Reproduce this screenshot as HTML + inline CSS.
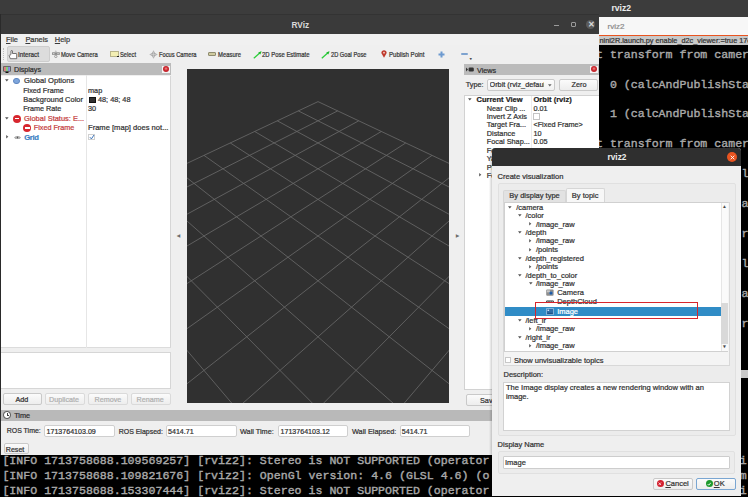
<!DOCTYPE html>
<html><head><meta charset="utf-8">
<style>
*{margin:0;padding:0;box-sizing:border-box}
html,body{width:748px;height:497px;overflow:hidden;background:#000}
body{position:relative;font-family:"Liberation Sans",sans-serif;color:#3c3c3c}
.a{position:absolute}
.t{position:absolute;white-space:nowrap;line-height:1;-webkit-text-stroke:.22px currentColor}
.mono{-webkit-text-stroke:.4px currentColor !important;font-family:"Liberation Mono",monospace;font-weight:normal;color:#a9a9a9;white-space:pre;font-size:11.6px}
.btn{position:absolute;background:linear-gradient(#fbfbfb,#ededed);border:1px solid #c9c9c9;border-radius:2px}
.inp{position:absolute;background:#fff;border:1px solid #cfcfcf;border-radius:2px}
.hdr{position:absolute;background:#c3c3c3}
.u{text-decoration:underline;text-decoration-thickness:.6px;text-underline-offset:1px}
</style></head><body>

<!-- ===== Terminal (background) ===== -->
<div class="a" style="left:0;top:0;width:748px;height:17px;background:#3c3c3c"></div>
<div class="t" style="left:611.5px;top:3.6px;font-size:8.6px;font-weight:bold;color:#ececec;-webkit-text-stroke:0">rviz2</div>
<div class="a" style="left:599px;top:17px;width:149px;height:19px;background:#f7f7f7"></div>
<div class="t" style="left:607.5px;top:23px;font-size:8px;color:#8c8c8c">rviz2</div>
<div class="a" style="left:599px;top:34.6px;width:149px;height:1.6px;background:#e95420"></div>
<div class="hdr" style="left:599px;top:36px;width:149px;height:9px;background:#c9c9c9"></div>
<div class="t" style="left:599.5px;top:37.2px;font-size:7.3px;color:#333">nini2R.launch.py enable_d2c_viewer:=true 17c</div>
<div class="a" style="left:599px;top:45px;width:149px;height:324px;background:#000"></div>
<div class="hdr" style="left:599px;top:369.5px;width:149px;height:8px;background:#c9c9c9"></div>

<div class="t mono" style="left:596px;top:49px">t transform from camer</div>
<div class="t mono" style="left:596px;top:78.5px">  0 (calcAndPublishSta</div>
<div class="t mono" style="left:596px;top:108.4px">  1 (calcAndPublishSta</div>
<div class="t mono" style="left:596px;top:138.4px">t transform from camer</div>
<div class="t mono" style="left:741.5px;top:168px">l</div>
<div class="t mono" style="left:741.5px;top:198px">a</div>
<div class="t mono" style="left:741.5px;top:228.4px">r</div>
<div class="t mono" style="left:741.5px;top:257.8px">l</div>
<div class="t mono" style="left:741.5px;top:287.5px">a</div>
<div class="t mono" style="left:741.5px;top:317.5px">r</div>

<div class="t mono" style="left:2.4px;top:455.2px">[INFO 1713758688.109569257] [rviz2]: Stereo is NOT SUPPORTED (operator                                    i</div>
<div class="t mono" style="left:2.4px;top:470.2px">[INFO 1713758688.109821676] [rviz2]: OpenGl version: 4.6 (GLSL 4.6) (o                                    m</div>
<div class="t mono" style="left:2.4px;top:485.2px">[INFO 1713758688.153307444] [rviz2]: Stereo is NOT SUPPORTED (operator                                    i</div>

<!-- ===== RViz window ===== -->
<div class="a" style="left:0;top:14px;width:599px;height:441px;background:#efefef;overflow:hidden">
  <!-- title bar -->
  <div class="a" style="left:0;top:0;width:599px;height:19.5px;background:#3a3a3a;border-top:1px solid #333"></div>
  <div class="t" style="left:291.5px;top:6.7px;font-size:8.3px;font-weight:bold;color:#dadada;-webkit-text-stroke:0">RViz</div>
  <div class="a" style="left:554px;top:11px;width:5px;height:1px;background:#9a9a9a"></div>
  <div class="a" style="left:571px;top:8px;width:5px;height:5px;border:1px solid #9a9a9a;border-radius:1px"></div>
  <div class="a" style="left:586px;top:6px;width:9px;height:9px;border-radius:50%;background:#5b5b5b"></div>
  <div class="t" style="left:588px;top:6.8px;font-size:8px;color:#e0e0e0">&#x2715;</div>
  <div class="a" style="left:0;top:0;width:1px;height:441px;background:#2a2a2a"></div>

    <!-- menu bar  (rel y = abs - 14) -->
  <div class="a" style="left:1px;top:19.5px;width:598px;height:11px;background:#f0f0f0"></div>
  <div class="t" style="left:6px;top:21.6px;font-size:7.4px;color:#3a3a3a"><span class="u">F</span>ile</div>
  <div class="t" style="left:25.4px;top:21.6px;font-size:7.4px;color:#3a3a3a"><span class="u">P</span>anels</div>
  <div class="t" style="left:54.8px;top:21.6px;font-size:7.4px;color:#3a3a3a"><span class="u">H</span>elp</div>
  <div class="a" style="left:1px;top:30.5px;width:598px;height:1px;background:#dadada"></div>
  <!-- toolbar -->
  <div class="a" style="left:1px;top:31px;width:598px;height:18.5px;background:#efefef"></div>
  <div class="a" style="left:3px;top:34px;width:1px;height:12px;border-left:1px dotted #bdbdbd"></div>
  <div class="a" style="left:7.2px;top:32.4px;width:42.6px;height:15.3px;background:#dcdcdc;border:1px solid #cdcdcd;border-radius:2px"></div>
    <!-- Interact icon: hand -->
  <svg class="a" style="left:8.3px;top:35.6px" width="10" height="10" viewBox="0 0 10 10"><path d="M3 4.4V1.1c0-.8 1.5-.8 1.5 0V3.5h3.6c.4 0 .6.3.6.6v4.6H2.3L1.2 5.8c-.2-.6.4-1 .9-.6z" fill="#fff" stroke="#4a4a4a" stroke-width=".75" stroke-linejoin="round"/></svg>
  <div class="t" style="left:18px;top:37.6px;font-size:6.9px;color:#333;transform:scaleX(0.913);transform-origin:0 0">Interact</div>
  <!-- Move camera icon -->
  <svg class="a" style="left:51.8px;top:35.8px" width="8" height="8" viewBox="0 0 8 8"><path d="M3.8 .4L2.6 1.6h2.4z" fill="#999"/><rect x=".1" y="2.3" width="7.7" height="2.6" fill="#8c8c8c"/><rect x="1" y="3" width="1.5" height="1.2" fill="#cfcfcf"/><rect x="5.3" y="3" width="1.5" height="1.2" fill="#cfcfcf"/><circle cx="3.8" cy="6.4" r="1.2" fill="none" stroke="#8c8c8c" stroke-width=".8"/></svg>
  <div class="t" style="left:60.8px;top:37.6px;font-size:6.9px;color:#333;transform:scaleX(0.847);transform-origin:0 0">Move Camera</div>
  <!-- Select icon -->
  <div class="a" style="left:110.4px;top:37.2px;width:8.2px;height:5.6px;background:#f3efb3;border:.8px solid #b8b48a"></div>
  <div class="a" style="left:117px;top:41.6px;width:1.8px;height:1.4px;background:#222"></div>
  <div class="t" style="left:120px;top:37.6px;font-size:6.9px;color:#333;transform:scaleX(0.834);transform-origin:0 0">Select</div>
  <!-- Focus camera -->
  <svg class="a" style="left:149px;top:36px" width="9" height="9" viewBox="0 0 9 9"><path d="M4.5 .3Q5.4 3.6 8.7 4.5Q5.4 5.4 4.5 8.7Q3.6 5.4 .3 4.5Q3.6 3.6 4.5 .3z" fill="#a9a9a9"/><path d="M4.5 1.5v6M1.5 4.5h6" stroke="#d4d4d4" stroke-width=".6"/></svg>
  <div class="t" style="left:158.5px;top:37.6px;font-size:6.9px;color:#333;transform:scaleX(0.829);transform-origin:0 0">Focus Camera</div>
  <!-- Measure -->
  <div class="a" style="left:208px;top:38.4px;width:8.4px;height:3.4px;background:#cfcba0;border:.7px solid #8f8c70;border-radius:1px"></div>
  <div class="t" style="left:217.5px;top:37.6px;font-size:6.9px;color:#333;transform:scaleX(0.857);transform-origin:0 0">Measure</div>
  <!-- 2D pose estimate -->
  <svg class="a" style="left:252.5px;top:36.5px" width="9" height="8" viewBox="0 0 9 8"><path d="M.8 7.2L7.8 1" stroke="#2ccf3a" stroke-width="1.3"/><path d="M8.6.3L5.2 1.6 7.3 3.6z" fill="#1fb52e"/></svg>
  <div class="t" style="left:262px;top:37.6px;font-size:6.9px;color:#333;transform:scaleX(0.860);transform-origin:0 0">2D Pose Estimate</div>
  <!-- 2D goal pose -->
  <svg class="a" style="left:321px;top:36.5px" width="9" height="8" viewBox="0 0 9 8"><path d="M.8 7.2L7.8 1" stroke="#2ccf3a" stroke-width="1.3"/><path d="M8.6.3L5.2 1.6 7.3 3.6z" fill="#1fb52e"/></svg>
  <div class="t" style="left:331px;top:37.6px;font-size:6.9px;color:#333;transform:scaleX(0.826);transform-origin:0 0">2D Goal Pose</div>
  <!-- publish point -->
  <svg class="a" style="left:380.5px;top:36px" width="6" height="8" viewBox="0 0 6 8"><path d="M3 7.8L.6 3.6C-.2 1.8 1.2.2 3 .2s3.2 1.6 2.4 3.4z" fill="#c0392b"/><circle cx="3" cy="2.7" r=".9" fill="#f3d2cf"/></svg>
  <div class="t" style="left:388.5px;top:37.6px;font-size:6.9px;color:#333;transform:scaleX(0.881);transform-origin:0 0">Publish Point</div>
  <!-- plus -->
  <svg class="a" style="left:437.5px;top:37px" width="7" height="7" viewBox="0 0 7 7"><path d="M3.5 .5v6M.5 3.5h6" stroke="#6d9ad0" stroke-width="2"/></svg>
  <!-- minus -->
  <div class="a" style="left:461.2px;top:39.2px;width:7px;height:2px;background:#7ea3cf;border-radius:1px"></div>
  <div class="t" style="left:469px;top:43.5px;font-size:3.5px;color:#444">&#9660;</div>

  <!-- Displays panel -->
  <div class="hdr" style="left:1.3px;top:49.3px;width:170px;height:12.2px;background:#bbbbbb"></div>
    <svg class="a" style="left:3px;top:52.3px" width="8" height="7.2" viewBox="0 0 8 7.2"><rect x=".3" y=".3" width="7.4" height="5.2" fill="#333"/><rect x=".9" y=".8" width="2.1" height="4.2" fill="#d98080"/><rect x="3" y=".8" width="2.1" height="4.2" fill="#7fcf7f"/><rect x="5.1" y=".8" width="2" height="4.2" fill="#8d8de6"/><rect x="2.5" y="5.6" width="3" height="1.4" fill="#111"/></svg>
  <div class="t" style="left:14px;top:53.2px;font-size:7.15px;color:#2e2e2e">Displays</div>
  <div class="a" style="left:162px;top:51.7px;width:8px;height:7px;background:#f4f4f4"></div>
  <div class="a" style="left:163.1px;top:52.1px;width:6px;height:6px;border-radius:50%;background:radial-gradient(circle at 50% 45%,#f0a0a0 0,#e06060 18%,#c8242c 45%,#b81c24 100%)"></div>
  
  <!-- tree -->
  <div class="a" style="left:1.3px;top:61.5px;width:170.2px;height:272px;background:#fff;border-right:1px solid #d6d6d6;border-bottom:1px solid #dcdcdc"></div>
  <div class="a" style="left:85.8px;top:61px;width:1px;height:273px;background:#e6e6e6"></div>
  <!-- row 1 -->
  <svg class="a" style="left:5.2px;top:65.3px" width="4" height="3" viewBox="0 0 4 3"><path d="M0 .2h3.6L1.8 2.6z" fill="#555"/></svg>
  <div class="a" style="left:13.4px;top:63.6px;width:6.3px;height:6.3px;border-radius:50%;background:#7ea6dc;border:.6px solid #5f86bf"></div>
  <div class="t" style="left:24px;top:63.1px;font-size:7.6px;color:#333">Global Options</div>
  <div class="t" style="left:23.2px;top:72.7px;font-size:7.22px;color:#333">Fixed Frame</div>
  <div class="t" style="left:88px;top:72.7px;font-size:7.3px;color:#333">map</div>
  <div class="t" style="left:23.2px;top:81.9px;font-size:7.48px;color:#333">Background Color</div>
  <div class="a" style="left:89px;top:82.6px;width:6.8px;height:6.1px;background:#303030;border:.5px solid #111"></div>
  <div class="t" style="left:98px;top:81.9px;font-size:7.3px;color:#333">48; 48; 48</div>
  <div class="t" style="left:23.2px;top:91.4px;font-size:7.22px;color:#333">Frame Rate</div>
  <div class="t" style="left:88px;top:91.4px;font-size:7.3px;color:#333">30</div>
  <!-- row 5 -->
  <svg class="a" style="left:5.2px;top:103.1px" width="4" height="3" viewBox="0 0 4 3"><path d="M0 .2h3.6L1.8 2.6z" fill="#555"/></svg>
  <div class="a" style="left:13px;top:100.5px;width:8px;height:8px;border-radius:50%;background:#d7262e"></div>
  <div class="a" style="left:14.6px;top:103.8px;width:4.8px;height:1.5px;background:#fff"></div>
  <div class="t" style="left:24px;top:100.9px;font-size:7.47px;color:#c43c3c">Global Status: E...</div>
  <div class="a" style="left:23.2px;top:110px;width:8px;height:8px;border-radius:50%;background:#d7262e"></div>
  <div class="a" style="left:24.8px;top:113.3px;width:4.8px;height:1.5px;background:#fff"></div>
  <div class="t" style="left:33.8px;top:110.4px;font-size:7.22px;color:#c43c3c">Fixed Frame</div>
  <div class="t" style="left:88px;top:110.4px;font-size:7.58px;color:#333">Frame [map] does not...</div>
  <!-- row 7 grid -->
  <svg class="a" style="left:5.5px;top:121.3px" width="3" height="4" viewBox="0 0 3 4"><path d="M.2 0v3.6L2.3 1.8z" fill="#555"/></svg>
  <svg class="a" style="left:13.6px;top:120.6px" width="7" height="5" viewBox="0 0 7 5"><path d="M.2 2.5C1.5.4 5.5.4 6.8 2.5 5.5 4.6 1.5 4.6.2 2.5z" fill="#8a8a8a"/><ellipse cx="3.5" cy="2.5" rx="2" ry="1.3" fill="#d8d8d8"/><circle cx="3.5" cy="2.5" r=".9" fill="#555"/></svg>
  <div class="t" style="left:24.2px;top:119.6px;font-size:7.68px;color:#3a7fc4;font-weight:bold;letter-spacing:-.3px">Grid</div>
  <div class="a" style="left:88.4px;top:120px;width:6.4px;height:6.2px;border:.7px solid #d0d0d0;background:#fff"></div>
  <svg class="a" style="left:89px;top:120.3px" width="6" height="6" viewBox="0 0 6 6"><path d="M.9 3.2l1.5 1.7L5 1" stroke="#3b73b9" stroke-width="1" fill="none"/></svg>
  <!-- box 2 -->
  <div class="a" style="left:1.3px;top:337.6px;width:170.2px;height:37.4px;background:#fff;border:1px solid #d6d6d6;border-left:0"></div>
  <!-- buttons -->
  <div class="btn" style="left:2.5px;top:379px;width:39.3px;height:12px"></div>
  <div class="t" style="left:15.5px;top:382px;font-size:7.2px;color:#2e2e2e">Add</div>
  <div class="btn" style="left:45px;top:379px;width:39.5px;height:12px;border-color:#dadada"></div>
  <div class="t" style="left:49px;top:382px;font-size:7.2px;color:#b0b0b0">Duplicate</div>
  <div class="btn" style="left:88px;top:379px;width:39.5px;height:12px;border-color:#dadada"></div>
  <div class="t" style="left:94.5px;top:382px;font-size:7.2px;color:#b0b0b0">Remove</div>
  <div class="btn" style="left:130.5px;top:379px;width:40.3px;height:12px;border-color:#dadada"></div>
  <div class="t" style="left:136.5px;top:382px;font-size:7.2px;color:#b0b0b0">Rename</div>

  <!-- splitter arrows -->
  <div class="t" style="left:177.3px;top:220.3px;font-size:4.2px;color:#666">&#9664;</div>
  <div class="t" style="left:455.8px;top:220.3px;font-size:4.2px;color:#666">&#9654;</div>
  <!-- 3D view -->
  <svg class="a" style="left:187px;top:55px" width="262" height="334" viewBox="0 0 262 334">
    <rect width="262" height="334" fill="#303030"/>
    <g stroke="#686868" stroke-width="0.85" fill="none"><line x1="131.00" y1="32.61" x2="416.09" y2="167.00"/><line x1="131.00" y1="32.61" x2="-154.09" y2="167.00"/><line x1="111.34" y1="41.88" x2="401.08" y2="188.22"/><line x1="150.66" y1="41.88" x2="-139.08" y2="188.22"/><line x1="90.27" y1="51.81" x2="384.41" y2="211.80"/><line x1="171.73" y1="51.81" x2="-122.41" y2="211.80"/><line x1="67.65" y1="62.47" x2="365.78" y2="238.15"/><line x1="194.35" y1="62.47" x2="-103.78" y2="238.15"/><line x1="43.28" y1="73.96" x2="344.82" y2="267.79"/><line x1="218.72" y1="73.96" x2="-82.82" y2="267.79"/><line x1="16.97" y1="86.37" x2="321.06" y2="301.39"/><line x1="245.03" y1="86.37" x2="-59.06" y2="301.39"/><line x1="-11.54" y1="99.80" x2="293.91" y2="339.79"/><line x1="273.54" y1="99.80" x2="-31.91" y2="339.79"/><line x1="-42.53" y1="114.41" x2="262.58" y2="384.09"/><line x1="304.53" y1="114.41" x2="-0.58" y2="384.09"/><line x1="-76.34" y1="130.35" x2="226.03" y2="435.78"/><line x1="338.34" y1="130.35" x2="35.97" y2="435.78"/><line x1="-113.36" y1="147.80" x2="182.83" y2="496.87"/><line x1="375.36" y1="147.80" x2="79.17" y2="496.87"/><line x1="-154.09" y1="167.00" x2="131.00" y2="570.17"/><line x1="416.09" y1="167.00" x2="131.00" y2="570.17"/></g>
  </svg>
  <!-- Views panel -->
    <div class="hdr" style="left:464.3px;top:49.8px;width:135px;height:11.4px;background:#bbbbbb"></div>
  <svg class="a" style="left:466px;top:53px" width="8" height="5" viewBox="0 0 8 5"><path d="M0 .6l2 1.9L0 4.4z" fill="#333"/><rect x="2.6" y=".6" width="5.2" height="3.8" rx="1.2" fill="#333"/></svg>
  <div class="t" style="left:477px;top:53px;font-size:7.2px;color:#2e2e2e">Views</div>
  <div class="a" style="left:589.8px;top:52px;width:7.9px;height:6.9px;background:#f4f4f4"></div>
  <div class="a" style="left:590.7px;top:52.3px;width:6px;height:6px;border-radius:50%;background:radial-gradient(circle at 50% 45%,#f0a0a0 0,#e06060 18%,#c8242c 45%,#b81c24 100%)"></div>
  
  <div class="t" style="left:465.7px;top:67.2px;font-size:7.3px;color:#333">Type:</div>
  <div class="btn" style="left:487.4px;top:64.5px;width:67.6px;height:12px;background:linear-gradient(#fdfdfd,#f1f1f1)"></div>
  <div class="t" style="left:489.5px;top:67.3px;font-size:7.3px;color:#333;width:54.5px;overflow:hidden">Orbit (rviz_default_plugins)</div>
  <svg class="a" style="left:547.6px;top:69.6px" width="4" height="3" viewBox="0 0 4 3"><path d="M0 .2h3.6L1.8 2.4z" fill="#666"/></svg>
  <div class="btn" style="left:558.6px;top:64.5px;width:39.4px;height:12px"></div>
  <div class="t" style="left:571.5px;top:67.3px;font-size:7.3px;color:#333">Zero</div>
  <!-- tree -->
  <div class="a" style="left:463.8px;top:81.2px;width:136.2px;height:295px;background:#fff;border:1px solid #d2d2d2;border-right:0"></div>
  <div class="a" style="left:531.2px;top:82px;width:1px;height:294px;background:#ececec"></div>
  <svg class="a" style="left:467.6px;top:84px" width="4" height="3" viewBox="0 0 4 3"><path d="M0 .2h3.6L1.8 2.6z" fill="#555"/></svg>
  <div class="t" style="left:476.5px;top:81.9px;font-size:7.5px;color:#222;font-weight:bold">Current View</div>
  <div class="t" style="left:533.4px;top:81.9px;font-size:7.6px;color:#222;font-weight:bold">Orbit (rviz)</div>
  <div class="t" style="left:486.8px;top:90.6px;font-size:7.3px;color:#333">Near Clip ...</div>
  <div class="t" style="left:533.4px;top:90.6px;font-size:7.3px;color:#333">0.01</div>
  <div class="t" style="left:486.8px;top:99px;font-size:7.3px;color:#333">Invert Z Axis</div>
  <div class="a" style="left:533.4px;top:99.4px;width:6.2px;height:6.2px;border:.7px solid #c4c4c4;background:#fff"></div>
  <div class="t" style="left:486.8px;top:107.4px;font-size:7.3px;color:#333">Target Fra...</div>
  <div class="t" style="left:533.4px;top:107.4px;font-size:7.3px;color:#333">&lt;Fixed Frame&gt;</div>
  <div class="t" style="left:486.8px;top:115.8px;font-size:7.3px;color:#333">Distance</div>
  <div class="t" style="left:533.4px;top:115.8px;font-size:7.3px;color:#333">10</div>
  <div class="t" style="left:486.8px;top:124.3px;font-size:7.3px;color:#333">Focal Shap...</div>
  <div class="t" style="left:533.4px;top:124.3px;font-size:7.3px;color:#333">0.05</div>
  <div class="t" style="left:486.8px;top:132.7px;font-size:7.3px;color:#333">Focal Poi...</div>
  <div class="t" style="left:486.8px;top:141.2px;font-size:7.3px;color:#333">Yaw</div>
  <div class="t" style="left:486.8px;top:149.6px;font-size:7.3px;color:#333">Pitch</div>
  <svg class="a" style="left:478.8px;top:159.3px" width="3" height="4" viewBox="0 0 3 4"><path d="M.2 0v3.6L2.3 1.8z" fill="#555"/></svg>
  <div class="t" style="left:486.8px;top:158.1px;font-size:7.3px;color:#333">Focal Point</div>
  <!-- save -->
  <div class="btn" style="left:466px;top:380px;width:40px;height:12.2px"></div>
  <div class="t" style="left:480px;top:383px;font-size:7.3px;color:#333">Save</div>

  <!-- Time panel -->
    <div class="hdr" style="left:1px;top:396px;width:598px;height:10.5px;background:#b9b9b9"></div>
  <div class="a" style="left:3px;top:397.3px;width:7.6px;height:7.6px;border-radius:50%;background:#fff;border:.9px solid #444"></div>
  <div class="a" style="left:6.6px;top:399.2px;width:.8px;height:2.6px;background:#444"></div>
  <div class="a" style="left:6.6px;top:401.2px;width:2.2px;height:.8px;background:#444"></div>
  <div class="t" style="left:14.2px;top:398.2px;font-size:7.3px;color:#2e2e2e">Time</div>
  <div class="t" style="left:6.7px;top:414.2px;font-size:6.97px;color:#333">ROS Time:</div>
  <div class="inp" style="left:44.1px;top:410.5px;width:70.6px;height:12.4px"></div>
  <div class="t" style="left:46.5px;top:415px;font-size:7.1px;color:#333">1713764103.09</div>
  <div class="t" style="left:118.7px;top:414.2px;font-size:6.98px;color:#333">ROS Elapsed:</div>
  <div class="inp" style="left:166.2px;top:410.5px;width:70.6px;height:12.4px"></div>
  <div class="t" style="left:168px;top:415px;font-size:7.1px;color:#333">5414.71</div>
  <div class="t" style="left:240px;top:414.2px;font-size:7.3px;color:#333">Wall Time:</div>
  <div class="inp" style="left:278.2px;top:410.5px;width:70.2px;height:12.4px"></div>
  <div class="t" style="left:280.5px;top:415px;font-size:7.1px;color:#333">1713764103.12</div>
  <div class="t" style="left:352px;top:414.2px;font-size:7.3px;color:#333">Wall Elapsed:</div>
  <div class="inp" style="left:400px;top:410.5px;width:70.3px;height:12.4px"></div>
  <div class="t" style="left:401.8px;top:415px;font-size:7.1px;color:#333">5414.71</div>
  <div class="btn" style="left:3.5px;top:428.5px;width:25px;height:11.8px"></div>
  <div class="t" style="left:5.8px;top:432.6px;font-size:7.1px;color:#333">Reset</div>


</div>

<!-- ===== Dialog ===== -->
<div class="a" style="left:488.5px;top:150px;width:3.5px;height:347px;background:linear-gradient(90deg,rgba(0,0,0,0),rgba(0,0,0,.18))"></div>
<div class="a" style="left:491.7px;top:148px;width:249.5px;height:347.6px;background:#efefef;border-radius:3px 3px 0 0;overflow:hidden">
  <div class="a" style="left:0;top:0;width:250px;height:17.7px;background:#2f2f2f"></div>
</div>
<div class="t" style="left:607.5px;top:153.2px;font-size:8.3px;font-weight:bold;color:#eeeeee;-webkit-text-stroke:0">rviz2</div>
<div class="a" style="left:726.8px;top:151.8px;width:10.4px;height:10.4px;border-radius:50%;background:#e95420"></div>
<svg class="a" style="left:729.5px;top:154.5px" width="5" height="5" viewBox="0 0 5 5"><path d="M.7.7l3.6 3.6M4.3.7L.7 4.3" stroke="#fff" stroke-width=".9"/></svg>
<div class="t" style="left:497.5px;top:173px;font-size:7.55px;color:#333">Create visualization</div>
<!-- group 1 -->
<div class="a" style="left:497.7px;top:182.7px;width:238px;height:253.6px;border:1px solid #e0e0e0;border-radius:2px;background:#ececec"></div>
<!-- tabs -->
<div class="a" style="left:503.3px;top:189.6px;width:62.6px;height:12.5px;background:#e2e2e2;border:1px solid #d6d6d6;border-bottom:0;border-radius:2px 2px 0 0"></div>
<div class="t" style="left:509.3px;top:192.4px;font-size:7.5px;color:#333">By display type</div>
<div class="a" style="left:566.3px;top:188.3px;width:39.1px;height:14px;background:#f7f7f7;border:1px solid #d6d6d6;border-bottom:0;border-radius:2px 2px 0 0"></div>
<div class="t" style="left:571.8px;top:192.4px;font-size:7.5px;color:#333">By topic</div>
<!-- tab pane -->
<div class="a" style="left:503px;top:201.7px;width:226.5px;height:164.5px;background:#f4f4f4;border:1px solid #d8d8d8"></div>
<div class="a" style="left:504px;top:202px;width:224.3px;height:149.5px;background:#fff;border:1px solid #d0d0d0"></div>
<div class="a" style="left:504.5px;top:306.9px;width:216.5px;height:9px;background:#308cc6"></div>
<svg class="a" style="left:508.1px;top:206.0px" width="4" height="3" viewBox="0 0 4 3"><path d="M0 .2h3.6L1.8 2.6z" fill="#555"/></svg>
<div class="t" style="left:516.2px;top:203.8px;font-size:7.5px;color:#333">/camera</div>
<svg class="a" style="left:518.3px;top:214.3px" width="4" height="3" viewBox="0 0 4 3"><path d="M0 .2h3.6L1.8 2.6z" fill="#555"/></svg>
<div class="t" style="left:525.5px;top:212.1px;font-size:7.5px;color:#333">/color</div>
<svg class="a" style="left:528.6px;top:222.2px" width="3" height="4" viewBox="0 0 3 4"><path d="M.2 0v3.6L2.3 1.8z" fill="#555"/></svg>
<div class="t" style="left:535.9px;top:220.5px;font-size:7.5px;color:#333">/image_raw</div>
<svg class="a" style="left:518.3px;top:231.0px" width="4" height="3" viewBox="0 0 4 3"><path d="M0 .2h3.6L1.8 2.6z" fill="#555"/></svg>
<div class="t" style="left:525.5px;top:228.8px;font-size:7.5px;color:#333">/depth</div>
<svg class="a" style="left:528.6px;top:239.1px" width="3" height="4" viewBox="0 0 3 4"><path d="M.2 0v3.6L2.3 1.8z" fill="#555"/></svg>
<div class="t" style="left:535.9px;top:237.4px;font-size:7.5px;color:#333">/image_raw</div>
<svg class="a" style="left:528.6px;top:247.6px" width="3" height="4" viewBox="0 0 3 4"><path d="M.2 0v3.6L2.3 1.8z" fill="#555"/></svg>
<div class="t" style="left:535.9px;top:245.9px;font-size:7.5px;color:#333">/points</div>
<svg class="a" style="left:518.3px;top:256.9px" width="4" height="3" viewBox="0 0 4 3"><path d="M0 .2h3.6L1.8 2.6z" fill="#555"/></svg>
<div class="t" style="left:525.5px;top:254.7px;font-size:7.5px;color:#333">/depth_registered</div>
<svg class="a" style="left:528.6px;top:264.7px" width="3" height="4" viewBox="0 0 3 4"><path d="M.2 0v3.6L2.3 1.8z" fill="#555"/></svg>
<div class="t" style="left:535.9px;top:263.0px;font-size:7.5px;color:#333">/points</div>
<svg class="a" style="left:518.3px;top:274.2px" width="4" height="3" viewBox="0 0 4 3"><path d="M0 .2h3.6L1.8 2.6z" fill="#555"/></svg>
<div class="t" style="left:525.5px;top:272.0px;font-size:7.5px;color:#333">/depth_to_color</div>
<svg class="a" style="left:528.6px;top:282.3px" width="4" height="3" viewBox="0 0 4 3"><path d="M0 .2h3.6L1.8 2.6z" fill="#555"/></svg>
<div class="t" style="left:535.9px;top:280.1px;font-size:7.5px;color:#333">/image_raw</div>
<svg class="a" style="left:546px;top:288.9px" width="8" height="7" viewBox="0 0 8 7"><rect x=".2" y=".6" width="7.4" height="6.2" rx="1" fill="#8e8e8e"/><rect x=".9" y="1.3" width="3" height="2" fill="#c8c8c8"/><circle cx="5" cy="4.1" r="1.7" fill="#2a6fc0"/><circle cx="5" cy="4.1" r=".7" fill="#0d2f66"/></svg>
<div class="t" style="left:557.2px;top:288.9px;font-size:7.5px;color:#333">Camera</div>
<svg class="a" style="left:546px;top:297.8px" width="8" height="7" viewBox="0 0 8 7"><rect x=".2" y="2.4" width="7.6" height="2.6" rx=".8" fill="#333"/><rect x="1.2" y="3.1" width="1.4" height="1" fill="#aaa"/><rect x="3.4" y="3.1" width="1.4" height="1" fill="#aaa"/><rect x="5.5" y="3.1" width="1.4" height="1" fill="#aaa"/></svg>
<div class="t" style="left:557.2px;top:297.8px;font-size:7.5px;color:#333">DepthCloud</div>
<svg class="a" style="left:546px;top:307.8px" width="8" height="7" viewBox="0 0 8 7"><rect x=".4" y=".4" width="7.2" height="6.4" rx=".6" fill="#2f6ea8" stroke="#b8d4ec" stroke-width=".7"/><rect x="1.5" y="1.6" width="1.6" height="1.4" fill="#cfe2f3"/><path d="M1.3 5.8h5.4V4.8H1.3z" fill="#1d4f80"/></svg>
<div class="t" style="left:557.2px;top:307.8px;font-size:7.5px;color:#fff">Image</div>
<svg class="a" style="left:518.3px;top:319.1px" width="4" height="3" viewBox="0 0 4 3"><path d="M0 .2h3.6L1.8 2.6z" fill="#555"/></svg>
<div class="t" style="left:525.5px;top:316.9px;font-size:7.5px;color:#333">/left_ir</div>
<svg class="a" style="left:528.6px;top:326.9px" width="3" height="4" viewBox="0 0 3 4"><path d="M.2 0v3.6L2.3 1.8z" fill="#555"/></svg>
<div class="t" style="left:535.9px;top:325.2px;font-size:7.5px;color:#333">/image_raw</div>
<svg class="a" style="left:518.3px;top:335.9px" width="4" height="3" viewBox="0 0 4 3"><path d="M0 .2h3.6L1.8 2.6z" fill="#555"/></svg>
<div class="t" style="left:525.5px;top:333.7px;font-size:7.5px;color:#333">/right_ir</div>
<svg class="a" style="left:528.6px;top:343.8px" width="3" height="4" viewBox="0 0 3 4"><path d="M.2 0v3.6L2.3 1.8z" fill="#555"/></svg>
<div class="t" style="left:535.9px;top:342.1px;font-size:7.5px;color:#333">/image_raw</div>
<!-- scrollbar -->
<div class="a" style="left:720.8px;top:203px;width:7.4px;height:147.5px;background:#fafafa;border-left:1px solid #e6e6e6"></div>
<div class="a" style="left:721.3px;top:303.2px;width:6.8px;height:41px;background:#d9d9d9"></div>
<div class="t" style="left:722.2px;top:205.2px;font-size:4.4px;color:#444">&#9650;</div>
<div class="t" style="left:722.2px;top:345.2px;font-size:4.4px;color:#444">&#9660;</div>
<!-- red highlight rect -->
<div class="a" style="left:534.8px;top:302.1px;width:163.2px;height:17.1px;border:1px solid #d8262c"></div>
<!-- checkbox -->
<div class="a" style="left:504.7px;top:356.9px;width:6.6px;height:6.6px;background:#fff;border:.7px solid #c8c8c8"></div>
<div class="t" style="left:513.9px;top:356.8px;font-size:7.5px;color:#333">Show unvisualizable topics</div>
<div class="t" style="left:503.5px;top:370.8px;font-size:7.5px;color:#333">Description:</div>
<div class="a" style="left:503.3px;top:381.6px;width:226.3px;height:49.1px;background:#fff;border:1px solid #d2d2d2"></div>
<div class="t" style="left:506px;top:384.2px;font-size:7.56px;color:#333">The Image display creates a new rendering window with an</div>
<div class="t" style="left:506px;top:392.8px;font-size:7.56px;color:#333">image.</div>
<div class="t" style="left:497.6px;top:441.4px;font-size:7.5px;color:#333">Display Name</div>
<div class="a" style="left:498.2px;top:450.6px;width:237px;height:23.8px;border:1px solid #e0e0e0;border-radius:2px;background:#ececec"></div>
<div class="a" style="left:503.4px;top:456.4px;width:226.2px;height:12.3px;background:#fff;border:1px solid #cdcdcd;border-radius:1px"></div>
<div class="t" style="left:505px;top:458.9px;font-size:7.5px;color:#333">Image</div>
<!-- buttons -->
<div class="btn" style="left:653px;top:477.6px;width:39.7px;height:12px"></div>
<div class="a" style="left:656.6px;top:480px;width:7.2px;height:7.2px;border-radius:50%;background:#d3202f"></div>
<svg class="a" style="left:658.4px;top:481.8px" width="3.6" height="3.6" viewBox="0 0 4 4"><path d="M.6.6l2.8 2.8M3.4.6L.6 3.4" stroke="#fff" stroke-width=".8"/></svg>
<div class="t" style="left:665.4px;top:480.2px;font-size:7.5px;color:#333"><span class="u">C</span>ancel</div>
<div class="btn" style="left:695.5px;top:477.6px;width:40.2px;height:12px;border-color:#7aa6d2"></div>
<div class="a" style="left:705.6px;top:480px;width:7.2px;height:7.2px;border-radius:50%;background:#1e9a2e"></div>
<svg class="a" style="left:707px;top:481.6px" width="4.4" height="4" viewBox="0 0 4.4 4"><path d="M.6 2l1.2 1.2L3.9.7" stroke="#fff" stroke-width=".9" fill="none"/></svg>
<div class="t" style="left:713.8px;top:480.2px;font-size:7.5px;color:#333"><span class="u">O</span>K</div>


</body></html>
